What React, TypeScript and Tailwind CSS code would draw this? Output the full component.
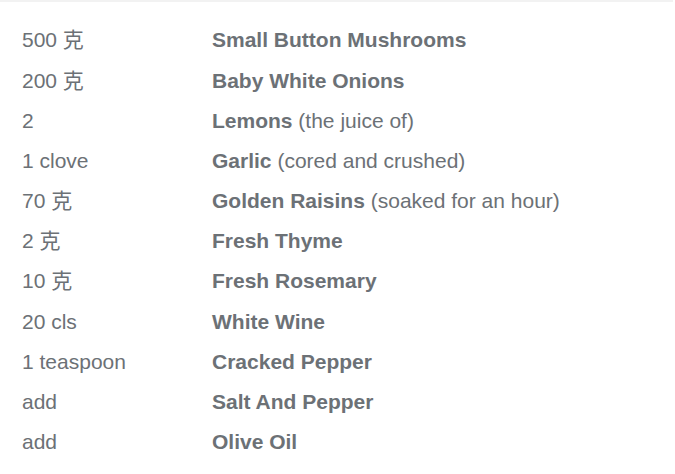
import React from 'react';

type Ingredient = { qty: string; name: string; note?: string };

const ingredients: Ingredient[] = [
    { qty: '500 克', name: 'Small Button Mushrooms' },
    { qty: '200 克', name: 'Baby White Onions' },
    { qty: '2', name: 'Lemons', note: '(the juice of)' },
    { qty: '1 clove', name: 'Garlic', note: '(cored and crushed)' },
    { qty: '70 克', name: 'Golden Raisins', note: '(soaked for an hour)' },
    { qty: '2 克', name: 'Fresh Thyme' },
    { qty: '10 克', name: 'Fresh Rosemary' },
    { qty: '20 cls', name: 'White Wine' },
    { qty: '1 teaspoon', name: 'Cracked Pepper' },
    { qty: 'add', name: 'Salt And Pepper' },
    { qty: 'add', name: 'Olive Oil' },
];

const App: React.FC = () => {
    return (
        <div className="min-h-screen bg-white font-['Liberation_Sans','Noto_Sans_CJK_SC',sans-serif] text-[#6c7176]">
            <div className="w-[673px] border-t-2 border-[#f2f2f2] pt-[18px]">
                <table className="w-full text-[21px]">
                    <tbody>
                        {ingredients.map((item, i) => (
                            <tr key={i} className="h-[40.2px]">
                                <td className="w-[212px] pl-[22px] align-middle">{item.qty}</td>
                                <td className="align-middle">
                                    <span className="font-bold">{item.name}</span>
                                    {item.note && <span> {item.note}</span>}
                                </td>
                            </tr>
                        ))}
                    </tbody>
                </table>
            </div>
        </div>
    );
};

export default App;
